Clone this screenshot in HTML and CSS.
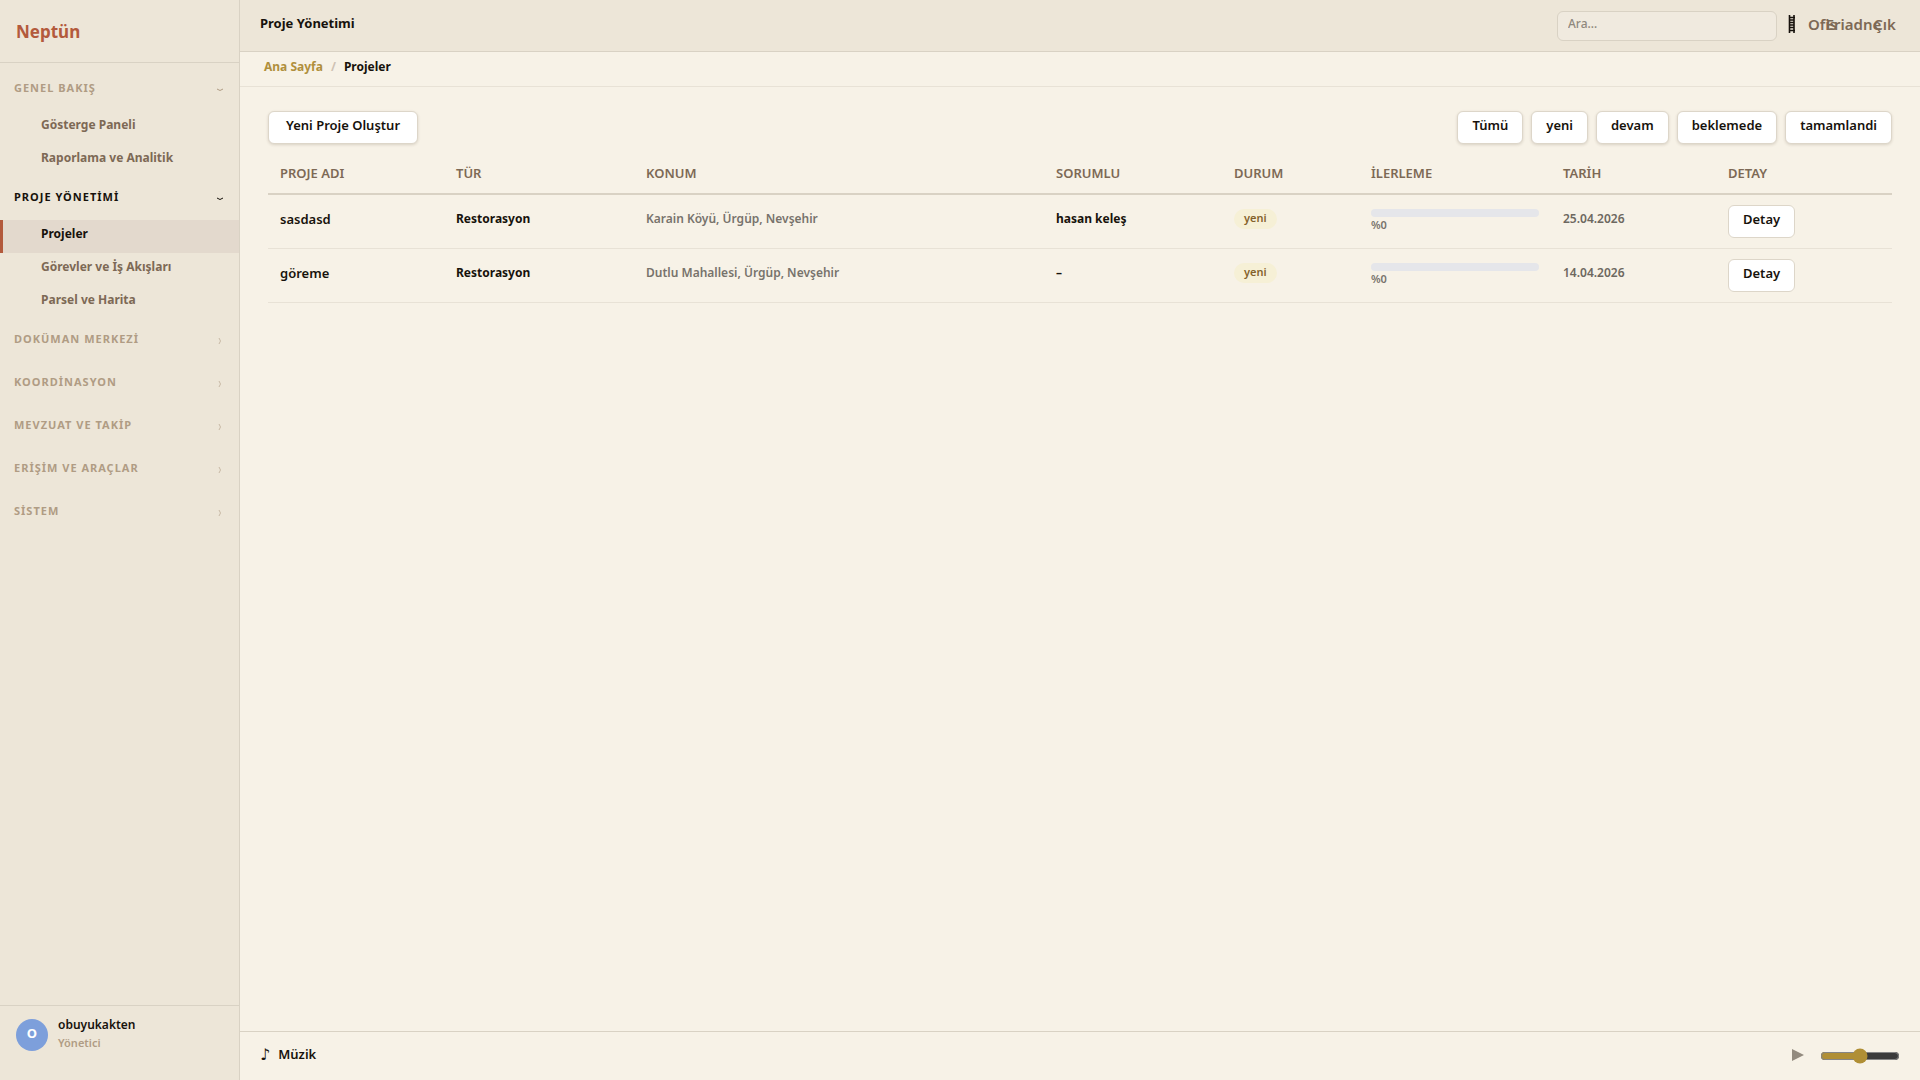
FILE: index.html
```html
<!DOCTYPE html>
<html lang="tr">
<head>
<meta charset="utf-8">
<meta name="viewport" content="width=device-width, initial-scale=1">
<title>Proje Yönetimi</title>
<link rel="stylesheet" href="styles.css">
</head>
<body>
<div class="app">
  <aside class="sidebar">
    <div class="brand">Neptün</div>
    <nav class="nav">
      <button class="group" type="button"><span>GENEL BAKIŞ</span><svg class="chev" viewBox="0 0 8 8"><path d="M1 3Q4 6 7 3"/></svg></button>
      <a class="item" href="#">Gösterge Paneli</a>
      <a class="item" href="#">Raporlama ve Analitik</a>
      <button class="group open" type="button"><span>PROJE YÖNETİMİ</span><svg class="chev" viewBox="0 0 8 8"><path d="M1 3Q4 6 7 3"/></svg></button>
      <a class="item active" href="#">Projeler</a>
      <a class="item" href="#">Görevler ve İş Akışları</a>
      <a class="item" href="#">Parsel ve Harita</a>
      <button class="group" type="button"><span>DOKÜMAN MERKEZİ</span><svg class="chev closed" viewBox="0 0 8 8"><path d="M3 1Q6 4 3 7"/></svg></button>
      <button class="group" type="button"><span>KOORDİNASYON</span><svg class="chev closed" viewBox="0 0 8 8"><path d="M3 1Q6 4 3 7"/></svg></button>
      <button class="group" type="button"><span>MEVZUAT VE TAKİP</span><svg class="chev closed" viewBox="0 0 8 8"><path d="M3 1Q6 4 3 7"/></svg></button>
      <button class="group" type="button"><span>ERİŞİM VE ARAÇLAR</span><svg class="chev closed" viewBox="0 0 8 8"><path d="M3 1Q6 4 3 7"/></svg></button>
      <button class="group" type="button"><span>SİSTEM</span><svg class="chev closed" viewBox="0 0 8 8"><path d="M3 1Q6 4 3 7"/></svg></button>
    </nav>
    <div class="user">
      <span class="avatar">O</span>
      <div class="who"><span class="name">obuyukakten</span><span class="role">Yönetici</span></div>
    </div>
  </aside>
  <div class="main">
    <header class="topbar">
      <h1 class="title">Proje Yönetimi</h1>
      <input class="search" type="search" placeholder="Ara…" aria-label="Ara">
      <div class="tools">
        <button class="tool" type="button" aria-label="Tema"><svg class="ladder" viewBox="0 0 8 20"><path d="M1.5 1V19M6 1V19" stroke-width="1.6"/><path d="M1 3.500H7M2 6H6M2 8.500H6M2 11H6M2 13.500H6M1 16.500H7" stroke-width="1.300"/></svg></button>
        <a class="tool" href="#">Ofis</a>
        <a class="tool" href="#">Eriadne</a>
        <a class="tool" href="#">Çık</a>
      </div>
    </header>
    <nav class="crumbs" aria-label="Konum"><a href="#">Ana Sayfa</a><span class="sep">/</span><span>Projeler</span></nav>
    <main class="content">
      <div class="actions">
        <button class="btn create" type="button">Yeni Proje Oluştur</button>
        <div class="filters">
          <button class="btn" type="button">Tümü</button>
          <button class="btn" type="button">yeni</button>
          <button class="btn" type="button">devam</button>
          <button class="btn" type="button">beklemede</button>
          <button class="btn" type="button">tamamlandi</button>
        </div>
      </div>
      <table class="projects">
        <colgroup><col class="c-name"><col class="c-type"><col class="c-place"><col class="c-owner"><col class="c-state"><col class="c-progress"><col class="c-date"><col class="c-detail"></colgroup>
        <thead><tr><th>PROJE ADI</th><th>TÜR</th><th>KONUM</th><th>SORUMLU</th><th>DURUM</th><th>İLERLEME</th><th>TARİH</th><th>DETAY</th></tr></thead>
        <tbody>
          <tr><td class="pname">sasdasd</td><td>Restorasyon</td><td class="muted">Karain Köyü, Ürgüp, Nevşehir</td><td>hasan keleş</td><td><span class="badge">yeni</span></td><td class="progress"><div class="bar"></div><div class="pct">%0</div></td><td class="date">25.04.2026</td><td class="detail"><button class="btn flat" type="button">Detay</button></td></tr>
          <tr><td class="pname">göreme</td><td>Restorasyon</td><td class="muted">Dutlu Mahallesi, Ürgüp, Nevşehir</td><td>–</td><td><span class="badge">yeni</span></td><td class="progress"><div class="bar"></div><div class="pct">%0</div></td><td class="date">14.04.2026</td><td class="detail"><button class="btn flat" type="button">Detay</button></td></tr>
        </tbody>
      </table>
    </main>
    <footer class="player">
      <span class="note">♪</span><span class="music">Müzik</span>
      <button class="play" type="button" aria-label="Oynat"><svg viewBox="0 0 12 12"><path d="M0 0L12 6L0 12Z"/></svg></button>
      <input class="volume" type="range" min="0" max="100" value="50" aria-label="Ses">
    </footer>
  </div>
</div>
</body>
</html>
```
FILE: styles.css
```css
* { box-sizing: border-box; }
body {
  margin: 0;
  background: #f7f2e7;
  color: #17120c;
  font: 600 13px/18px "Noto Sans", sans-serif;
}
button, input { font: inherit; color: inherit; }
a { text-decoration: none; color: inherit; }
button { cursor: pointer; }

.app { display: flex; min-height: 100vh; }

.sidebar {
  display: flex;
  flex-direction: column;
  flex: 0 0 240px;
  background: #ede6d8;
  border-right: 1px solid #d9d2c4;
}
.brand {
  height: 63px;
  padding: 20px 16px;
  border-bottom: 1px solid #d9d2c4;
  color: #b35a3c;
  font-size: 17px;
  line-height: 24px;
  font-weight: 700;
}
.nav { flex: 1; padding-top: 5px; }
.group {
  display: flex;
  align-items: center;
  justify-content: space-between;
  width: 100%;
  height: 43px;
  padding: 0 15px 3px 14px;
  border: 0;
  background: none;
  color: #b09c84;
  font-size: 11px;
  font-weight: 700;
  letter-spacing: 1px;
}
.group.open { color: #17120c; }
.chev {
  width: 8px;
  height: 8px;
  margin-top: 4px;
  fill: none;
  stroke: currentColor;
}
.chev.closed { opacity: .6; }
.item {
  display: block;
  height: 33px;
  padding: 5px 16px 0 38px;
  border-left: 3px solid transparent;
  color: #7d6955;
  font-size: 12px;
  font-weight: 700;
}
.item.active {
  background: #e3d9cd;
  border-left-color: #b35a3c;
  color: #17120c;
}
.user {
  display: flex;
  gap: 10px;
  height: 75px;
  padding: 13px 16px;
  border-top: 1px solid #d9d2c4;
}
.avatar {
  width: 32px;
  height: 32px;
  border-radius: 50%;
  background: #7d9fdb;
  color: #fff;
  text-align: center;
  line-height: 28px;
  font-weight: 700;
}
.who { display: flex; flex-direction: column; margin-top: -3px; }
.name { font-size: 12px; }
.role { font-size: 11px; color: #b09c84; line-height: 17px; }

.main { flex: 1; min-width: 0; display: flex; flex-direction: column; }
.topbar {
  display: flex;
  align-items: center;
  height: 52px;
  padding: 0 19px 0 20px;
  background: #ede6d8;
  border-bottom: 1px solid #d9d2c4;
}
.title { flex: 1; margin: 0 0 5px; font-size: 13px; font-weight: 700; }
.search {
  width: 220px;
  height: 30px;
  padding: 0 10px 4px;
  border: 1px solid #d9d2c4;
  border-radius: 6px;
  background: #f0eadf;
  font-size: 12px;
  font-weight: 500;
}
.search::placeholder { color: #8f887d; opacity: 1; }
.tools { display: flex; }
.tool {
  display: flex;
  align-items: center;
  justify-content: center;
  width: 31px;
  height: 28px;
  padding: 0 2px 4px 0;
  border: 0;
  background: none;
  color: #7d6955;
  font-size: 15px;
  white-space: nowrap;
}
.ladder { flex: none; width: 8px; height: 20px; fill: none; stroke: #17120c; }

.crumbs {
  display: flex;
  gap: 8px;
  height: 35px;
  padding: 6px 24px;
  border-bottom: 1px solid #e8e2d6;
  font-size: 12px;
  font-weight: 700;
}
.crumbs a { color: #b08f3c; }
.sep { color: #cfc3b4; }

.content { flex: 1; padding: 24px 28px; }
.actions { display: flex; justify-content: space-between; align-items: center; }
.filters { display: flex; gap: 8px; }
.btn {
  height: 33px;
  padding: 0 14px 5px;
  border: 1px solid #ddd6c9;
  border-radius: 6px;
  background: #fff;
  box-shadow: 0 1px 3px rgba(60, 45, 20, .16);
}
.btn.create { padding: 0 17px 5px; }
.btn.flat { display: block; box-shadow: none; }

.projects { width: 100%; table-layout: fixed; border-collapse: collapse; }
.c-name { width: 176px; }
.c-type { width: 190px; }
.c-place { width: 410px; }
.c-owner { width: 178px; }
.c-state { width: 137px; }
.c-progress { width: 192px; }
.c-date { width: 165px; }
.c-detail { width: 176px; }
th {
  height: 50px;
  padding: 9px 12px 0;
  border-bottom: 2px solid #d9d2c4;
  color: #7d6955;
  font-weight: 600;
  text-align: left;
}
td {
  height: 54px;
  padding: 0 12px 4px;
  border-bottom: 1px solid #e8e2d6;
  font-size: 12px;
  font-weight: 700;
}
td.pname { font-size: 13px; font-weight: 600; }
td.progress, td.detail { padding: 0 12px; font-size: 13px; font-weight: 600; }
td.muted { color: #77736c; font-weight: 600; }
td.date { color: #6d6860; font-weight: 600; }
.badge {
  display: inline-block;
  padding: 0 10px 2px;
  border-radius: 10px;
  background: #f6f0d6;
  color: #84622b;
  font-size: 11px;
  font-weight: 600;
}
.bar { height: 8px; border-radius: 4px; background: #e5e6ea; }
.pct { color: #77736c; font-size: 11px; line-height: 16px; }

.player {
  display: flex;
  align-items: center;
  height: 49px;
  padding: 0 20px;
  border-top: 1px solid #d9d2c4;
}
.note { margin: 0 8px 3px 0; font: 16px/20px "DejaVu Sans", sans-serif; }
.music { flex: 1; margin-bottom: 5px; }
.play { display: flex; padding: 0; border: 0; background: none; margin: 0 16px 2px 0; }
.play svg { width: 12px; height: 12px; fill: #938b7f; }
.volume { width: 80px; margin: 0; accent-color: #b08f35; color-scheme: dark; }
```
